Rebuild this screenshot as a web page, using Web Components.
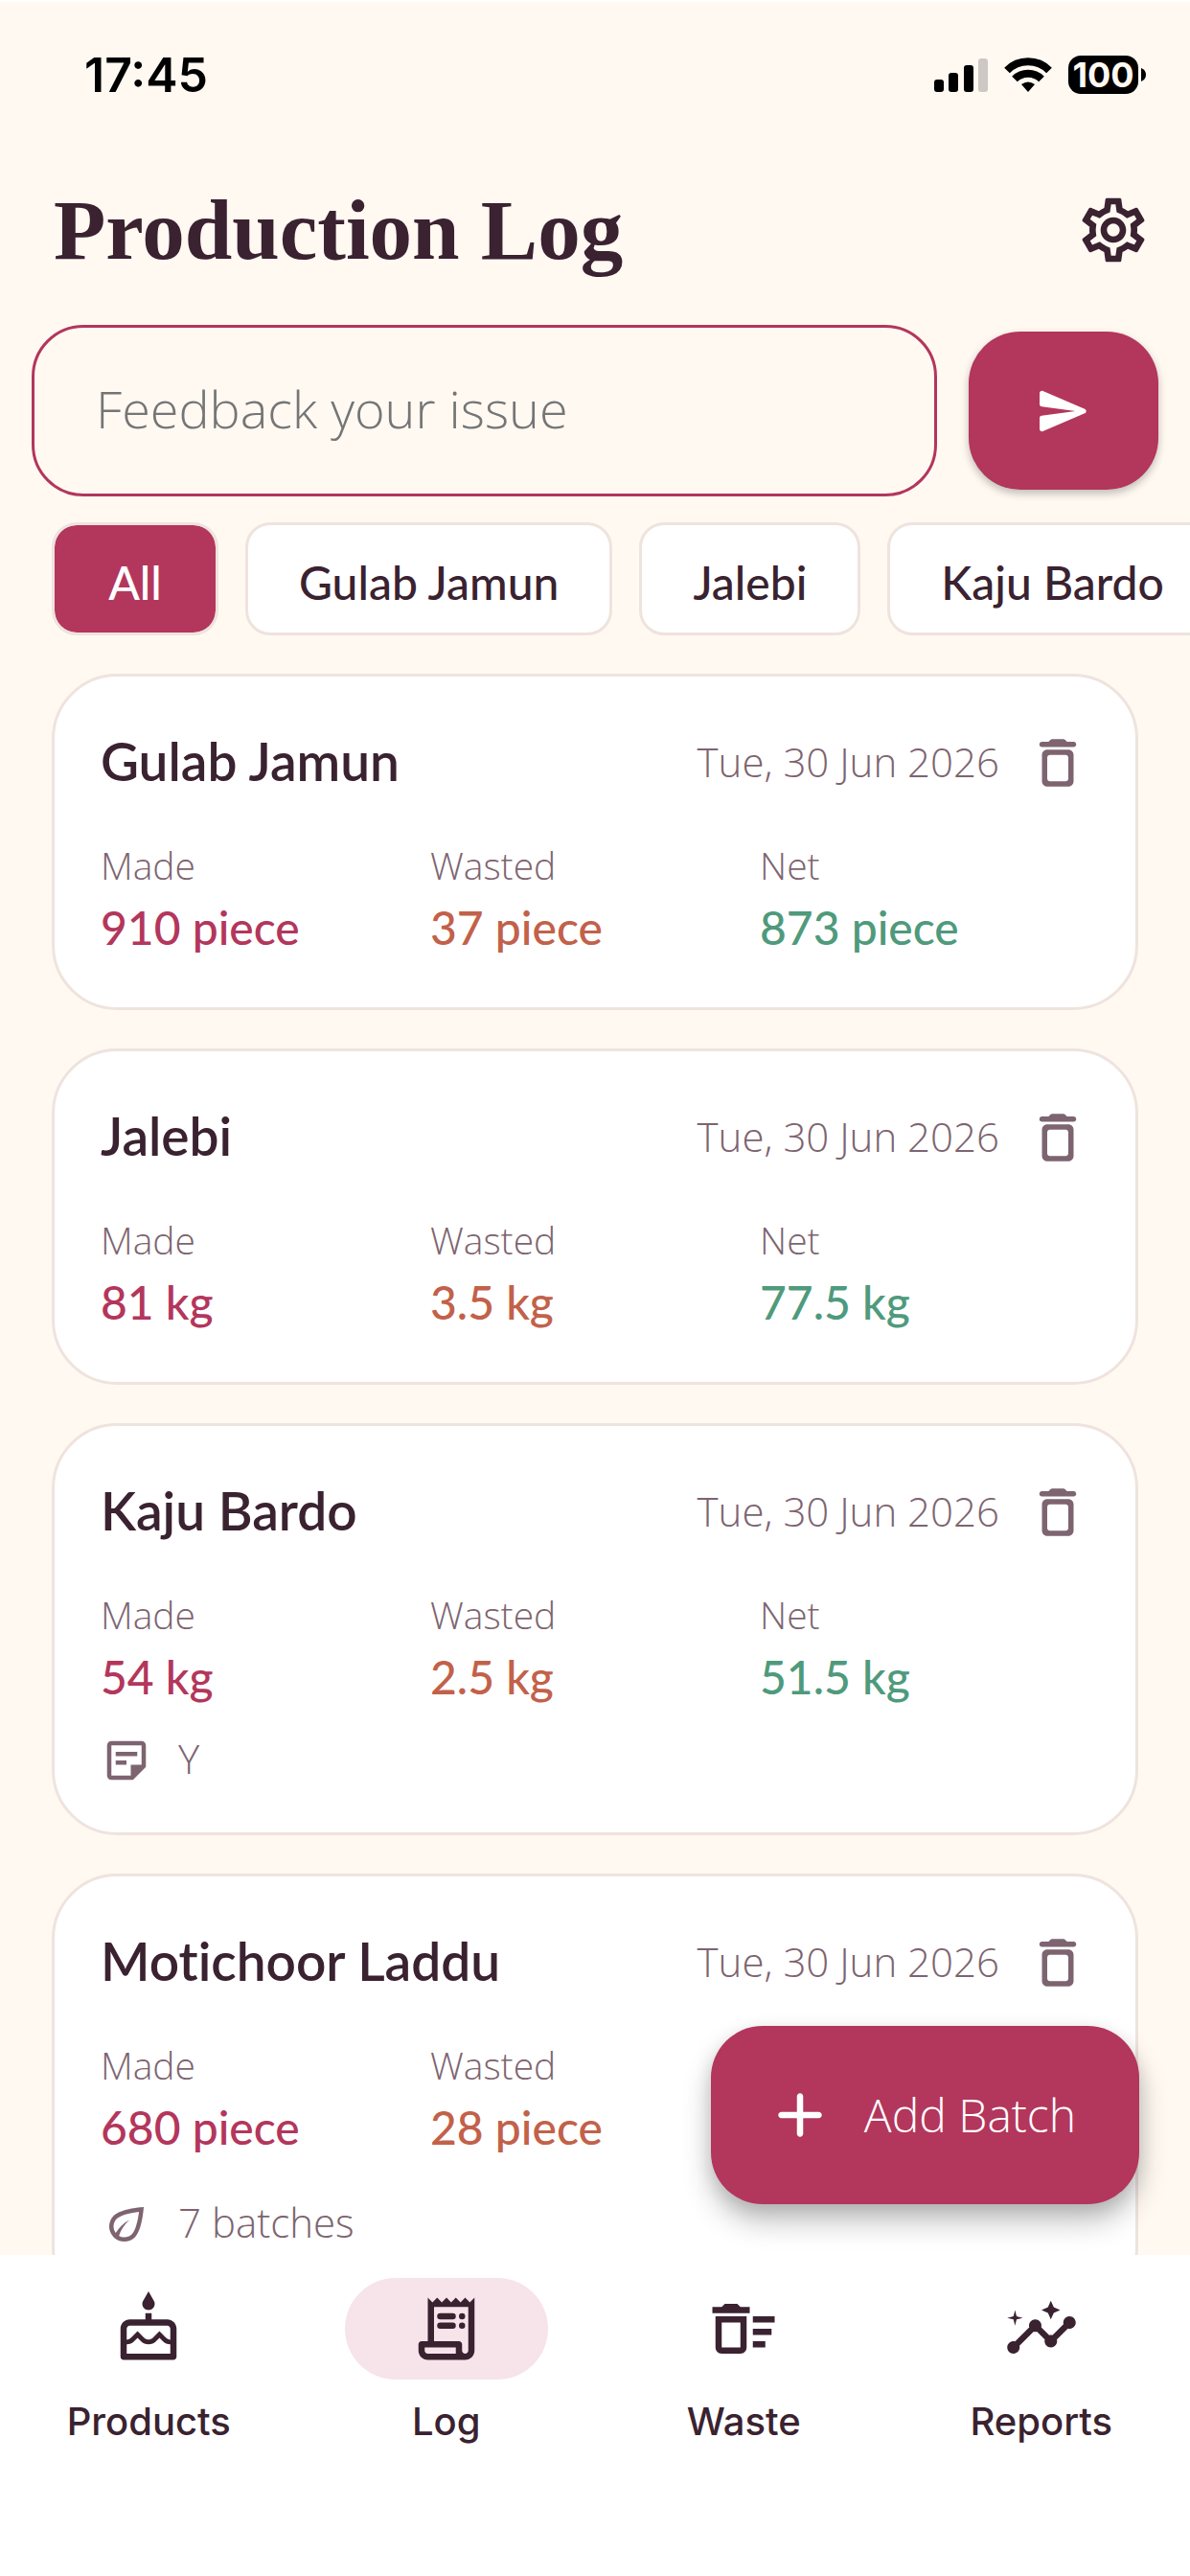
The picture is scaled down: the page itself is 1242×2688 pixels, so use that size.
<!DOCTYPE html>
<html lang="en">
<head>
<meta charset="utf-8">
<meta name="viewport" content="width=device-width, initial-scale=1">
<title>Production Log</title>
<style>
  :root{
    --bg:#fff9f2;--surface:#fff;--ink:#3a2230;--muted:#7d6470;--line:#efe3de;
    --primary:#b3365c;--primary-soft:#f6e4ea;--waste:#c2614a;--net:#4f9a7c;
    --sans:Lato,"Noto Sans",sans-serif;
    --light:"Open Sans","Noto Sans",sans-serif;
    --ui:Inter,Roboto,sans-serif;
    --serif:"Liberation Serif","Times New Roman",serif;
  }
  html,body{height:100%;margin:0}
  body{background:var(--bg);color:var(--ink);font-family:var(--sans)}
</style>
</head>
<body>
<log-app>
  <status-bar slot="top" time="17:45" battery="100"></status-bar>
  <page-header slot="top">Production Log</page-header>
  <feedback-bar slot="top"></feedback-bar>
  <filter-chips slot="top" items="All,Gulab Jamun,Jalebi,Kaju Bardo" selected="All"></filter-chips>

  <batch-card made="910 piece" wasted="37 piece" net="873 piece" date="Tue, 30 Jun 2026">Gulab Jamun</batch-card>
  <batch-card made="81 kg" wasted="3.5 kg" net="77.5 kg" date="Tue, 30 Jun 2026">Jalebi</batch-card>
  <batch-card made="54 kg" wasted="2.5 kg" net="51.5 kg" date="Tue, 30 Jun 2026" note="Y">Kaju Bardo</batch-card>
  <batch-card made="680 piece" wasted="28 piece" date="Tue, 30 Jun 2026" batches="7 batches">Motichoor Laddu</batch-card>

  <add-button slot="fab">Add Batch</add-button>

  <nav-bar slot="nav">
    <nav-item icon="cake" href="#products">Products</nav-item>
    <nav-item icon="receipt" href="#log" active>Log</nav-item>
    <nav-item icon="sweep" href="#waste">Waste</nav-item>
    <nav-item icon="insights" href="#reports">Reports</nav-item>
  </nav-bar>
</log-app>

<script>
const ICONS = {
  settings: "M19.43 12.98c.04-.32.07-.64.07-.98 0-.34-.03-.66-.07-.98l2.11-1.65c.19-.15.24-.42.12-.64l-2-3.46c-.09-.16-.26-.25-.44-.25-.06 0-.12.01-.17.03l-2.49 1c-.52-.4-1.08-.73-1.69-.98l-.38-2.65C14.46 2.18 14.25 2 14 2h-4c-.25 0-.46.18-.49.42l-.38 2.65c-.61.25-1.17.59-1.69.98l-2.49-1c-.06-.02-.12-.03-.18-.03-.17 0-.34.09-.43.25l-2 3.46c-.13.22-.07.49.12.64l2.11 1.65c-.04.32-.07.65-.07.98 0 .33.03.66.07.98l-2.11 1.65c-.19.15-.24.42-.12.64l2 3.46c.09.16.26.25.44.25.06 0 .12-.01.17-.03l2.49-1c.52.4 1.08.73 1.69.98l.38 2.65c.03.24.24.42.49.42h4c.25 0 .46-.18.49-.42l.38-2.65c.61-.25 1.17-.59 1.69-.98l2.49 1c.06.02.12.03.18.03.17 0 .34-.09.43-.25l2-3.46c.12-.22.07-.49-.12-.64l-2.11-1.65zm-1.98-1.71c.04.31.05.52.05.73 0 .21-.02.43-.05.73l-.14 1.13.89.7 1.08.84-.7 1.21-1.27-.51-1.04-.42-.9.68c-.43.32-.84.56-1.25.73l-1.06.43-.16 1.13-.2 1.35h-1.4l-.19-1.35-.16-1.13-1.06-.43c-.43-.18-.83-.41-1.23-.71l-.91-.7-1.06.43-1.27.51-.7-1.21 1.08-.84.89-.7-.14-1.13c-.03-.31-.05-.54-.05-.74s.02-.43.05-.73l.14-1.13-.89-.7-1.08-.84.7-1.21 1.27.51 1.04.42.9-.68c.43-.32.84-.56 1.25-.73l1.06-.43.16-1.13.2-1.35h1.39l.19 1.35.16 1.13 1.06.43c.43.18.83.41 1.23.71l.91.7 1.06-.43 1.27-.51.7 1.21-1.07.85-.89.7.14 1.13zM12 8c-2.21 0-4 1.79-4 4s1.79 4 4 4 4-1.79 4-4-1.79-4-4-4zm0 6c-1.1 0-2-.9-2-2s.9-2 2-2 2 .9 2 2-.9 2-2 2z",
  send: "M3.4 20.4l17.45-7.48c.81-.35.81-1.49 0-1.84L3.4 3.6c-.66-.29-1.39.2-1.39.91L2 9.12c0 .5.37.93.87.99L17 12 2.87 13.88c-.5.07-.87.5-.87 1l.01 4.61c0 .71.73 1.2 1.39.91z",
  trash: "M6 19c0 1.1.9 2 2 2h8c1.1 0 2-.9 2-2V9c0-1.1-.9-2-2-2H8c-1.1 0-2 .9-2 2v10zM9 9h6c.55 0 1 .45 1 1v8c0 .55-.45 1-1 1H9c-.55 0-1-.45-1-1v-8c0-.55.45-1 1-1zm6.5-5l-.71-.71c-.18-.18-.44-.29-.7-.29H9.91c-.26 0-.52.11-.7.29L8.5 4H6c-.55 0-1 .45-1 1s.45 1 1 1h12c.55 0 1-.45 1-1s-.45-1-1-1h-2.5z",
  note: "M19 5v9h-5v5H5V5h14m0-2H5c-1.1 0-2 .9-2 2v14c0 1.1.9 2 2 2h10l6-6V5c0-1.1-.9-2-2-2zm-7 11H7v-2h5v2zm5-4H7V8h10v2z",
  leaf: "M20 4S9.53 4.57 6.05 8.05c-2.73 2.73-2.73 7.17 0 9.9 2.73 2.73 7.17 2.73 9.9 0C19.43 14.47 20 4 20 4zM17.8 6.2c-.45 3.76-1.52 8.59-3.26 10.34-.95.95-2.2 1.46-3.54 1.46-.89 0-1.73-.25-2.48-.68.92-2.88 2.62-5.41 4.88-7.32-2.63 1.36-4.84 3.46-6.37 6-1.48-1.96-1.35-4.75.44-6.54C9.21 7.72 14.04 6.65 17.8 6.2z",
  plus: "M18 13h-5v5c0 .55-.45 1-1 1s-1-.45-1-1v-5H6c-.55 0-1-.45-1-1s.45-1 1-1h5V6c0-.55.45-1 1-1s1 .45 1 1v5h5c.55 0 1 .45 1 1s-.45 1-1 1z",
  cake: "M12 6c1.11 0 2-.9 2-2 0-.38-.1-.73-.29-1.03L12 0l-1.71 2.97c-.19.3-.29.65-.29 1.03 0 1.1.9 2 2 2zm6 3h-5V7h-2v2H6c-1.66 0-3 1.34-3 3v9c0 .55.45 1 1 1h16c.55 0 1-.45 1-1v-9c0-1.66-1.34-3-3-3zm1 11H5v-3c.9-.01 1.76-.37 2.4-1.01l1.09-1.07 1.07 1.07c1.31 1.31 3.59 1.3 4.89 0l1.08-1.07 1.07 1.07c.64.64 1.5 1 2.4 1.01v3zm0-4.5c-.51-.01-.99-.2-1.35-.57l-2.13-2.13-2.14 2.13c-.74.74-2.03.74-2.77 0L8.48 12.8l-2.14 2.14c-.35.36-.83.56-1.34.57V12c0-.55.45-1 1-1h12c.55 0 1 .45 1 1v3.5z",
  receipt: "M19.5 3.5L18 2l-1.5 1.5L15 2l-1.5 1.5L12 2l-1.5 1.5L9 2 7.5 3.5 6 2v14H4c-.55 0-1 .45-1 1v2c0 1.66 1.34 3 3 3h12c1.66 0 3-1.34 3-3V2l-1.5 1.5zM15 20H6c-.55 0-1-.45-1-1v-1h10v2zm4-1c0 .55-.45 1-1 1s-1-.45-1-1v-2c0-.55-.45-1-1-1H8V5h11v14zM10 7h4a1 1 0 0 1 0 2h-4a1 1 0 0 1 0-2zM17 7a1 1 0 0 1 0 2 1 1 0 0 1 0-2zM10 10h4a1 1 0 0 1 0 2h-4a1 1 0 0 1 0-2zM17 10a1 1 0 0 1 0 2 1 1 0 0 1 0-2z",
  sweep: "M15 16h4v2h-4v-2zm0-8h7v2h-7V8zm0 4h6v2h-6v-2zM3 18c0 1.1.9 2 2 2h6c1.1 0 2-.9 2-2V8H3v10zm2-8h6v8H5v-8zm5-6H6L5 5H2v2h12V5h-3l-1-1z",
  insights: "M21 8c-1.45 0-2.26 1.44-1.93 2.51l-3.55 3.56c-.3-.09-.74-.09-1.04 0l-2.55-2.55C12.27 10.45 11.46 9 10 9c-1.45 0-2.27 1.44-1.93 2.52l-4.56 4.55C2.44 15.74 1 16.55 1 18c0 1.1.9 2 2 2 1.45 0 2.26-1.44 1.93-2.51l4.55-4.56c.3.09.74.09 1.04 0l2.55 2.55C12.73 16.55 13.54 18 15 18c1.45 0 2.27-1.44 1.93-2.52l3.56-3.55C21.56 12.26 23 11.45 23 10c0-1.1-.9-2-2-2zM15 9l.94-2.07L18 6l-2.06-.93L15 3l-.92 2.07L12 6l2.08.93zM3.5 11L4 9l2-.5L4 8l-.5-2L3 8l-2 .5L3 9z",
};
const icon = (name, size) => `<svg width="${size}" height="${size}" viewBox="0 0 24 24" fill="currentColor" aria-hidden="true"><path d="${ICONS[name]}"/></svg>`;
const BASE = `*,*::before,*::after{box-sizing:border-box} svg{display:block;flex:0 0 auto} button{font:inherit;color:inherit;border:0;background:none;padding:0;margin:0;cursor:pointer}`;

class Base extends HTMLElement {
  constructor() { super(); this.attachShadow({ mode: "open" }); }
  connectedCallback() { this.shadowRoot.innerHTML = `<style>${BASE}${this.css()}</style>${this.html()}`; this.ready(); }
  attr(n) { return this.getAttribute(n) || ""; }
  ready() {}
}

class LogApp extends Base {
  css() { return `
    :host{display:flex;flex-direction:column;height:100vh;overflow:hidden}
    main{position:relative;flex:1 1 0;min-height:0;display:flex;flex-direction:column}
    .list{flex:1 1 0;min-height:0;overflow:hidden auto;scrollbar-width:none;display:flex;flex-direction:column;gap:40px;padding:40px 54px 0}
    .fab{position:absolute;right:53px;bottom:53px}`; }
  html() { return `<slot name="top"></slot><main><div class="list"><slot></slot></div><div class="fab"><slot name="fab"></slot></div></main><slot name="nav"></slot>`; }
}

class StatusBar extends Base {
  css() { return `
    :host{display:flex;justify-content:space-between;align-items:center;border-top:2px solid #fff;padding:40px 46px 0 88px;color:#000;font:600 50px/72px var(--ui)}
    .right{display:flex;align-items:center;gap:17px}
    .batt{display:flex;align-items:center;gap:3px}
    .batt b{width:73px;height:40px;border-radius:13px;background:#000;color:var(--bg);font:700 36px/40px var(--ui);text-align:center}`; }
  html() { return `
    <span>${this.attr("time")}</span>
    <div class="right">
      <svg width="56" height="35" viewBox="0 0 56 35"><rect y="22" width="10" height="13" rx="3"/><rect x="15" y="15" width="10" height="20" rx="3"/><rect x="31" y="7" width="10" height="28" rx="3"/><rect x="46" width="10" height="35" rx="3" fill="#cdc8c3"/></svg>
      <svg width="50" height="36" viewBox="0 0 50 36" fill="none" stroke="#000" stroke-width="8"><path d="M3 13.500A31 31 0 0 1 47 13.500"/><path d="M11 22.500A20 20 0 0 1 39 22.500"/><path d="M25 36l-7-8q7-5 14 0z" fill="#000" stroke="none"/></svg>
      <div class="batt"><b>${this.attr("battery")}</b><svg width="5" height="14" viewBox="0 0 5 14"><path d="M0 0q5 2 5 7t-5 7z"/></svg></div>
    </div>`; }
}

class PageHeader extends Base {
  css() { return `
    :host{display:flex;justify-content:space-between;align-items:center;padding:78px 32px 0 56px}
    h1{margin:0;font:700 89px/96px var(--serif)}
    button{display:grid;place-items:center;width:96px;height:96px}`; }
  html() { return `<h1><slot></slot></h1><button aria-label="Settings">${icon("settings", 80)}</button>`; }
}

class FeedbackBar extends Base {
  css() { return `
    :host{display:block;padding:51px 33px 0}
    form{display:flex;align-items:center;gap:33px}
    input{flex:1;min-width:0;height:179px;padding:0 64px 6px;border:3px solid var(--primary);border-radius:54px;background:transparent;color:var(--ink);font:350 54px/72px var(--light);outline:0}
    input::placeholder{color:#757575;opacity:1}
    button{display:grid;place-items:center;width:198px;height:165px;border-radius:54px;background:var(--primary);color:#fff;box-shadow:0 4px 8px rgba(0,0,0,.25)}`; }
  html() { return `<form><input type="text" aria-label="Feedback" placeholder="Feedback your issue"><button type="submit" aria-label="Send">${icon("send", 60)}</button></form>`; }
  ready() { this.shadowRoot.querySelector("form").addEventListener("submit", (e) => { e.preventDefault(); e.target.reset(); }); }
}

class FilterChips extends Base {
  css() { return `
    :host{display:flex;gap:28px;padding:27px 0 0 54px;overflow:hidden}
    button{flex:0 0 auto;min-width:174px;padding:8px 53px 0;border:3px solid var(--line);border-radius:26px;background:var(--surface);background-clip:padding-box;font:500 48px/104px var(--sans);white-space:nowrap}
    button[aria-pressed=true]{background-color:var(--primary);color:#fff}`; }
  html() { return this.attr("items").split(",").map((t) => `<button aria-pressed="${t === this.attr("selected")}">${t}</button>`).join(""); }
  ready() {
    const all = [...this.shadowRoot.querySelectorAll("button")];
    all.forEach((b) => b.addEventListener("click", () => all.forEach((o) => o.setAttribute("aria-pressed", o === b))));
  }
}

class BatchCard extends Base {
  css() { return `
    :host{display:block;flex:0 0 auto;padding:48px;border:3px solid var(--line);border-radius:68px;background:var(--surface)}
    .head{display:flex;align-items:center;gap:28px;height:84px}
    h2{flex:1;margin:0;padding-bottom:4px;font:600 55px/72px var(--sans);font-variant-ligatures:none}
    time,.extra span{padding-bottom:4px}
    time,.extra{color:var(--muted);font:350 42px/51px var(--light)}
    button{color:var(--muted)}
    dl{display:grid;grid-template-columns:repeat(3,1fr);margin:38px 0 0;padding-bottom:2px}
    dt{color:var(--muted);font:350 39px/54px var(--light)}
    dd{margin:5px 0 0;font:500 48px/66px var(--sans)}
    .made{color:var(--primary)}.wasted{color:var(--waste)}.net{color:var(--net)}
    .extra{display:flex;align-items:center;gap:27px;margin-top:24px}
    .batches{padding:14px 0}`; }
  html() {
    const stat = (label, key) => this.attr(key) ? `<div><dt>${label}</dt><dd class="${key}">${this.attr(key)}</dd></div>` : "";
    return `
    <div class="head"><h2><slot></slot></h2><time>${this.attr("date")}</time><button aria-label="Delete">${icon("trash", 66)}</button></div>
    <dl>${stat("Made", "made")}${stat("Wasted", "wasted")}${stat("Net", "net")}</dl>
    ${this.attr("note") ? `<div class="extra">${icon("note", 54)}<span>${this.attr("note")}</span></div>` : ""}
    ${this.attr("batches") ? `<div class="extra batches">${icon("leaf", 54)}<span>${this.attr("batches")}</span></div>` : ""}`;
  }
  ready() { this.shadowRoot.querySelector("button").addEventListener("click", () => this.remove()); }
}

class AddButton extends Base {
  css() { return `
    :host{display:block}
    button{display:flex;align-items:center;gap:28px;height:186px;padding:0 66px 0 54px;border-radius:54px;background:var(--primary);color:#fff;font:300 48px/66px var(--light);white-space:nowrap;box-shadow:0 18px 30px rgba(0,0,0,.24),0 6px 18px rgba(0,0,0,.12)}`; }
  html() { return `<button>${icon("plus", 78)}<span><slot></slot></span></button>`; }
}

class NavBar extends Base {
  css() { return `:host{display:block;background:var(--surface)} nav{display:flex;padding:24px 0 137px}`; }
  html() { return `<nav><slot></slot></nav>`; }
}

class NavItem extends Base {
  css() { return `
    :host{display:block;flex:1 1 0}
    a{display:flex;flex-direction:column;align-items:center;gap:20px;color:inherit;text-decoration:none;font:500 40px/48px var(--ui)}
    .pill{display:grid;place-items:center;width:212px;height:106px;border-radius:53px}
    :host([active]) .pill{background:var(--primary-soft)}`; }
  html() { return `<a href="${this.attr("href")}"><span class="pill">${icon(this.attr("icon"), 78)}</span><span><slot></slot></span></a>`; }
}

customElements.define("log-app", LogApp);
customElements.define("status-bar", StatusBar);
customElements.define("page-header", PageHeader);
customElements.define("feedback-bar", FeedbackBar);
customElements.define("filter-chips", FilterChips);
customElements.define("batch-card", BatchCard);
customElements.define("add-button", AddButton);
customElements.define("nav-bar", NavBar);
customElements.define("nav-item", NavItem);
</script>
</body>
</html>
